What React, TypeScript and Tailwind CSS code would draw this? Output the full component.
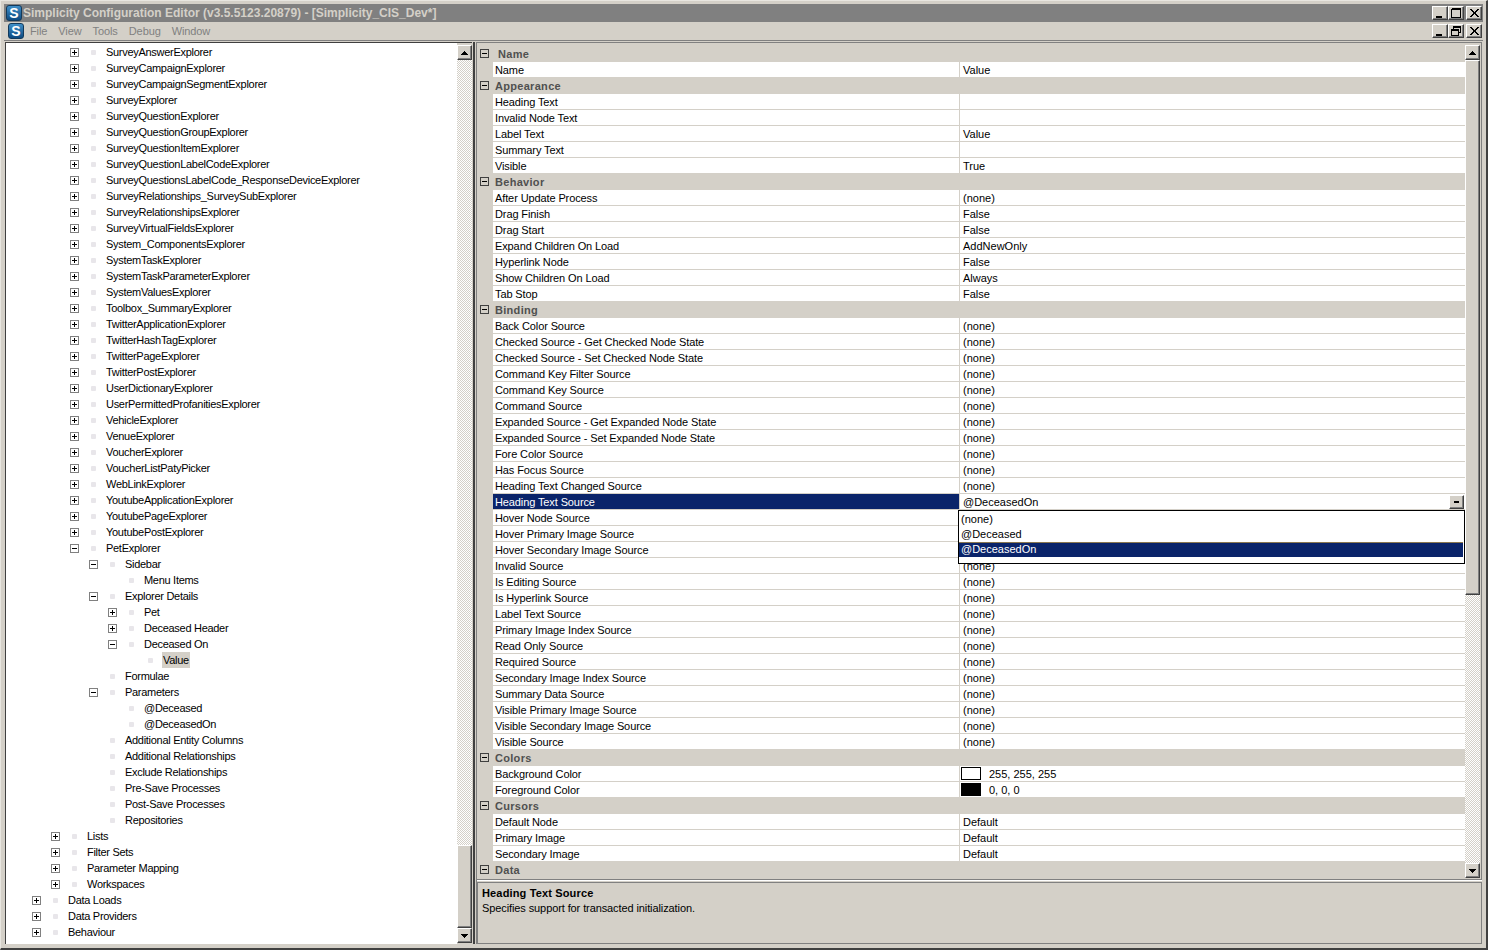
const font = "font-['Liberation_Sans',Arial,sans-serif]";

type TreeRow = { label: string; level: number; toggle?: "plus" | "minus"; selected?: boolean };

const plusRows = (level: number, labels: string[]): TreeRow[] =>
  labels.map((label) => ({ label, level, toggle: "plus" }));

const treeRows: TreeRow[] = [
  ...plusRows(3, [
    "SurveyAnswerExplorer",
    "SurveyCampaignExplorer",
    "SurveyCampaignSegmentExplorer",
    "SurveyExplorer",
    "SurveyQuestionExplorer",
    "SurveyQuestionGroupExplorer",
    "SurveyQuestionItemExplorer",
    "SurveyQuestionLabelCodeExplorer",
    "SurveyQuestionsLabelCode_ResponseDeviceExplorer",
    "SurveyRelationships_SurveySubExplorer",
    "SurveyRelationshipsExplorer",
    "SurveyVirtualFieldsExplorer",
    "System_ComponentsExplorer",
    "SystemTaskExplorer",
    "SystemTaskParameterExplorer",
    "SystemValuesExplorer",
    "Toolbox_SummaryExplorer",
    "TwitterApplicationExplorer",
    "TwitterHashTagExplorer",
    "TwitterPageExplorer",
    "TwitterPostExplorer",
    "UserDictionaryExplorer",
    "UserPermittedProfanitiesExplorer",
    "VehicleExplorer",
    "VenueExplorer",
    "VoucherExplorer",
    "VoucherListPatyPicker",
    "WebLinkExplorer",
    "YoutubeApplicationExplorer",
    "YoutubePageExplorer",
    "YoutubePostExplorer",
  ]),
  { label: "PetExplorer", level: 3, toggle: "minus" },
  { label: "Sidebar", level: 4, toggle: "minus" },
  { label: "Menu Items", level: 5 },
  { label: "Explorer Details", level: 4, toggle: "minus" },
  { label: "Pet", level: 5, toggle: "plus" },
  { label: "Deceased Header", level: 5, toggle: "plus" },
  { label: "Deceased On", level: 5, toggle: "minus" },
  { label: "Value", level: 6, selected: true },
  { label: "Formulae", level: 4 },
  { label: "Parameters", level: 4, toggle: "minus" },
  { label: "@Deceased", level: 5 },
  { label: "@DeceasedOn", level: 5 },
  { label: "Additional Entity Columns", level: 4 },
  { label: "Additional Relationships", level: 4 },
  { label: "Exclude Relationships", level: 4 },
  { label: "Pre-Save Processes", level: 4 },
  { label: "Post-Save Processes", level: 4 },
  { label: "Repositories", level: 4 },
  ...plusRows(2, ["Lists", "Filter Sets", "Parameter Mapping", "Workspaces"]),
  ...plusRows(1, ["Data Loads", "Data Providers", "Behaviour", "Security"]),
];

const levelIndent: Record<number, string> = {
  1: "pl-[26px]",
  2: "pl-[45px]",
  3: "pl-[64px]",
  4: "pl-[83px]",
  5: "pl-[102px]",
  6: "pl-[121px]",
};

type Prop = { name: string; value?: string; swatch?: string; active?: boolean };
type Category = { title: string; props: Prop[] };

const none = (names: string[]): Prop[] => names.map((name) => ({ name, value: "(none)" }));

const categories: Category[] = [
  { title: "Name", props: [{ name: "Name", value: "Value" }] },
  {
    title: "Appearance",
    props: [
      { name: "Heading Text" },
      { name: "Invalid Node Text" },
      { name: "Label Text", value: "Value" },
      { name: "Summary Text" },
      { name: "Visible", value: "True" },
    ],
  },
  {
    title: "Behavior",
    props: [
      { name: "After Update Process", value: "(none)" },
      { name: "Drag Finish", value: "False" },
      { name: "Drag Start", value: "False" },
      { name: "Expand Children On Load", value: "AddNewOnly" },
      { name: "Hyperlink Node", value: "False" },
      { name: "Show Children On Load", value: "Always" },
      { name: "Tab Stop", value: "False" },
    ],
  },
  {
    title: "Binding",
    props: [
      ...none([
        "Back Color Source",
        "Checked Source - Get Checked Node State",
        "Checked Source - Set Checked Node State",
        "Command Key Filter Source",
        "Command Key Source",
        "Command Source",
        "Expanded Source - Get Expanded Node State",
        "Expanded Source - Set Expanded Node State",
        "Fore Color Source",
        "Has Focus Source",
        "Heading Text Changed Source",
      ]),
      { name: "Heading Text Source", value: "@DeceasedOn", active: true },
      ...none([
        "Hover Node Source",
        "Hover Primary Image Source",
        "Hover Secondary Image Source",
        "Invalid Source",
        "Is Editing Source",
        "Is Hyperlink Source",
        "Label Text Source",
        "Primary Image Index Source",
        "Read Only Source",
        "Required Source",
        "Secondary Image Index Source",
        "Summary Data Source",
        "Visible Primary Image Source",
        "Visible Secondary Image Source",
        "Visible Source",
      ]),
    ],
  },
  {
    title: "Colors",
    props: [
      { name: "Background Color", value: "255, 255, 255", swatch: "bg-white" },
      { name: "Foreground Color", value: "0, 0, 0", swatch: "bg-black" },
    ],
  },
  {
    title: "Cursors",
    props: [
      { name: "Default Node", value: "Default" },
      { name: "Primary Image", value: "Default" },
      { name: "Secondary Image", value: "Default" },
    ],
  },
  { title: "Data", props: [] },
];

const raised =
  "border border-t-white border-l-white border-r-[#404040] border-b-[#404040] bg-[#d4d0c8] shadow-[inset_-1px_-1px_0_#808080]";

const Toggle = ({ open }: { open: boolean }) => (
  <svg width="9" height="9" viewBox="0 0 9 9" className="shrink-0 mt-[4px]" shapeRendering="crispEdges">
    <rect x="0.5" y="0.5" width="8" height="8" fill="#fff" stroke="#808080" />
    <path d={open ? "M2 4.5H7" : "M2 4.5H7M4.5 2V7"} stroke="#000" />
  </svg>
);

const Logo = () => (
  <div className="w-4 h-4 shrink-0 rounded-[3px] bg-gradient-to-b from-[#3f8fc8] to-[#0c4a80] border border-[#123a5c] flex items-center justify-center text-white text-[14px] font-bold leading-none">
    S
  </div>
);

const CaptionButton = ({ kind }: { kind: "min" | "max" | "restore" | "close" }) => (
  <div className={`w-[16px] h-[14px] flex items-center justify-center ${raised}`}>
    <svg width="10" height="10" viewBox="0 0 10 10" shapeRendering="crispEdges" fill="none" stroke="#000">
      {kind === "min" && <path d="M1 8.5H7M1 9.5H7" />}
      {kind === "max" && <path d="M0.5 1.5H9.5V9.5H0.5ZM0.5 0.5H9.5" />}
      {kind === "restore" && <path d="M2.5 2.5V0.5H9.5V6.5H7.5M2.5 1.5H9.5M0.5 3.5H7.5V9.5H0.5ZM0.5 4.5H7.5" />}
      {kind === "close" && (
        <path d="M1 1L9 9M2 1L10 9M9 1L1 9M10 1L2 9" shapeRendering="auto" strokeWidth="1" />
      )}
    </svg>
  </div>
);

const ScrollArrow = ({ dir }: { dir: "up" | "down" }) => (
  <div className={`h-[15px] shrink-0 flex items-center justify-center ${raised}`}>
    <svg width="7" height="4" viewBox="0 0 7 4" fill="#000" shapeRendering="crispEdges">
      <path d={dir === "up" ? "M3 0H4V1H5V2H6V3H7V4H0V3H1V2H2V1H3Z" : "M0 0H7V1H6V2H5V3H4V4H3V3H2V2H1V1H0Z"} />
    </svg>
  </div>
);

const checker =
  "bg-[repeating-conic-gradient(#d4d0c8_0_25%,#ffffff_0_50%)] bg-[length:2px_2px]";

const Scrollbar = ({ before, thumb, after, track }: { before: string; thumb: string; after: string; track: string }) => (
  <div className={`shrink-0 flex flex-col pt-[2px] ${track}`}>
    <ScrollArrow dir="up" />
    <div className={`${before} ${checker}`} />
    <div className={`${thumb} ${raised}`} />
    <div className={`${after} ${checker}`} />
    <ScrollArrow dir="down" />
  </div>
);

const TreeItem = ({ row }: { row: TreeRow }) => (
  <div className={`h-4 flex items-center ${levelIndent[row.level]}`}>
    <div className="w-[20px] h-4 shrink-0 flex items-start">{row.toggle && <Toggle open={row.toggle === "minus"} />}</div>
    <div className="w-[15px] shrink-0 flex items-center">
      <div className="ml-[1px] w-[5px] h-[5px] rounded-[1px] bg-[#e8e6ea]" />
    </div>
    <span className={`px-[1px] leading-4 tracking-[-0.29px] ${row.selected ? "bg-[#d4d0c8]" : ""}`}>{row.label}</span>
  </div>
);

const PropRow = ({ prop }: { prop: Prop }) => (
  <div className="h-4 flex border-b border-[#d4d0c8] bg-white leading-[17px]">
    <div
      className={`w-[466px] shrink-0 pl-[2px] tracking-[-0.11px] ${prop.active ? "bg-[#0a246a] text-white" : ""}`}
    >
      {prop.name}
    </div>
    <div className="flex-1 flex items-center border-l border-[#d4d0c8] pl-[3px]">
      {prop.swatch && <div className={`w-[20px] h-[13px] -ml-[2px] mr-2 border border-black ${prop.swatch}`} />}
      <span className="flex-1 pt-[2px]">{prop.value}</span>
      {prop.active && (
        <div className={`w-[15px] h-[14px] mr-[1px] flex items-center justify-center ${raised}`}>
          <div className="w-[5px] h-[2px] bg-black" />
        </div>
      )}
    </div>
  </div>
);

const CategoryBlock = ({ category }: { category: Category }) => (
  <div>
    <div className="h-4 flex items-center bg-[#d4d0c8]">
      <div className="w-[15px] h-4 shrink-0 flex justify-center items-start">
        <svg width="9" height="9" viewBox="0 0 9 9" className="mt-[3px]" shapeRendering="crispEdges">
          <rect x="0.5" y="0.5" width="8" height="8" fill="none" stroke="#404040" />
          <path d="M2 4.5H7" stroke="#000" />
        </svg>
      </div>
      <span
        className={`font-bold text-[#505050] tracking-[0.3px] ${category.title === "Name" ? "pl-[6px]" : "pl-[3px]"}`}
      >
        {category.title}
      </span>
    </div>
    <div className="pl-[16px] bg-[#d4d0c8]">
      {category.props.map((prop) => (
        <PropRow key={prop.name} prop={prop} />
      ))}
    </div>
  </div>
);

const PropertyGrid = () => (
  <div className="relative flex-1 min-w-0 h-[836px] pt-[3px] overflow-hidden bg-[#d4d0c8]">
    {categories.map((category) => (
      <CategoryBlock key={category.title} category={category} />
    ))}
    <div className="absolute left-[481px] top-[467px] w-[507px] h-[54px] border border-black bg-white leading-[15px] pt-[1px] pr-[1px]">
      <div className="h-[15px] pl-[2px]">(none)</div>
      <div className="h-[15px] pl-[2px]">@Deceased</div>
      <div className="h-[15px] pl-[2px] bg-[#0a246a] text-white shadow-[inset_0_1px_0_#8a7750]">@DeceasedOn</div>
    </div>
  </div>
);

export default function App() {
  return (
    <div className={`${font} w-[1488px] h-[950px] overflow-hidden bg-[#d4d0c8] text-black text-[11px] flex flex-col border-t border-l border-t-[#e8e6e0] border-l-[#e8e6e0] border-r-2 border-b-2 border-r-[#404040] border-b-[#404040]`}>
      <div className="h-[3px] shrink-0" />
      <div className="mx-[3px] h-[18px] shrink-0 bg-[#808080] flex items-center pl-[2px] pr-[1px] gap-[1px]">
        <Logo />
        <span className="flex-1 font-bold text-[#d4d0c8] text-[12px]">
          Simplicity Configuration Editor (v3.5.5123.20879) - [Simplicity_CIS_Dev*]
        </span>
        <div className="flex items-center">
          <CaptionButton kind="min" />
          <CaptionButton kind="max" />
          <div className="w-[2px]" />
          <CaptionButton kind="close" />
        </div>
      </div>
      <div className="mx-[3px] h-[19px] shrink-0 flex items-center pl-[4px] pr-[1px] border-b border-[#808080]">
        <Logo />
        <div className="flex-1 flex gap-[11px] pl-[6px] text-[#808080] tracking-[-0.1px]">
          <span>File</span>
          <span>View</span>
          <span>Tools</span>
          <span>Debug</span>
          <span>Window</span>
        </div>
        <div className="flex items-center">
          <CaptionButton kind="min" />
          <CaptionButton kind="restore" />
          <div className="w-[2px]" />
          <CaptionButton kind="close" />
        </div>
      </div>
      <div className="flex-1 min-h-0 flex pl-[4px] pr-[4px] pb-[4px] pt-[1px]">
        <div className="w-[467px] shrink-0 flex border-l border-t border-[#404040]">
          <div className="flex-1 min-w-0 bg-white overflow-hidden pt-[1px]">
            {treeRows.map((row) => (
              <TreeItem key={row.label + row.level} row={row} />
            ))}
          </div>
          <Scrollbar track="w-[15px]" before="h-[785px]" thumb="h-[83px]" after="h-0" />
        </div>
        <div className="w-[4px] ml-[1px] shrink-0 border-l-2 border-r border-l-[#404040] border-r-[#808080]" />
        <div className="flex-1 min-w-0 flex flex-col">
          <div className="flex border-t border-r border-[#808080]">
            <PropertyGrid />
            <Scrollbar track="w-[15px] mr-[1px]" before="h-0" thumb="h-[535px]" after="h-[268px]" />
          </div>
          <div className="h-[2px] shrink-0 border-b border-white bg-[#808080]" />
          <div className="flex-1 mt-[1px] border border-[#808080] pl-1 pt-[2px]">
            <div className="font-bold leading-4 tracking-[0.15px]">Heading Text Source</div>
            <div className="leading-[14px] tracking-[-0.1px]">Specifies support for transacted initialization.</div>
          </div>
        </div>
      </div>
    </div>
  );
}
